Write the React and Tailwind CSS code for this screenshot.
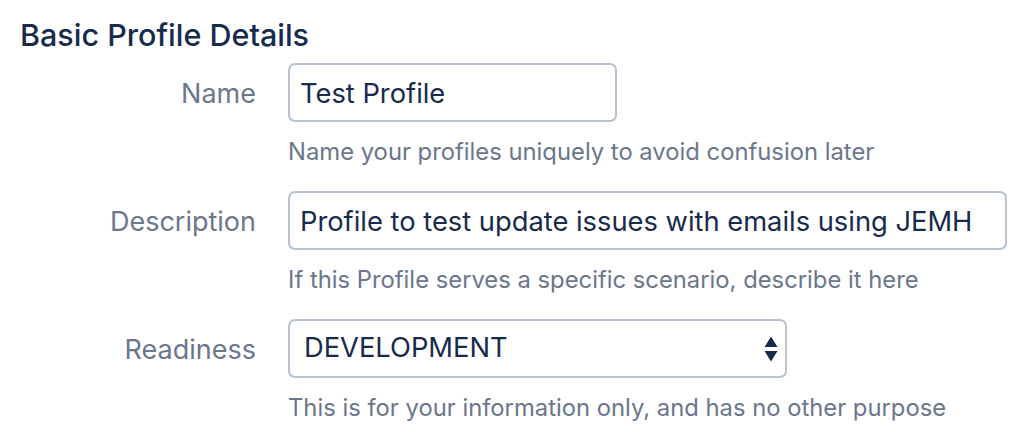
export default function App() {
  const rows = [
    {
      label: "Name",
      value: "Test Profile",
      width: "w-[329px]",
      help: "Name your profiles uniquely to avoid confusion later",
    },
    {
      label: "Description",
      value: "Profile to test update issues with emails using JEMH",
      width: "w-[719px]",
      help: "If this Profile serves a specific scenario, describe it here",
    },
  ];
  return (
    <div
      className="w-[1015px] h-[435px] bg-white overflow-hidden"
      style={{ fontFamily: "Inter, 'Noto Sans', sans-serif" }}
    >
      <h2 className="pl-[20px] pt-[17px] text-[30.5px] leading-[36px] font-medium text-[#172b4d] whitespace-nowrap">
        Basic Profile Details
      </h2>
      <div className="mt-[10px] flex flex-col">
        {rows.map((r) => (
          <div key={r.label} className="flex h-[128px]">
            <div className="w-[256px] h-[59px] flex items-center justify-end pt-[3px] text-[27px] text-[#6b778c] whitespace-nowrap">
              {r.label}
            </div>
            <div className="ml-[32px] flex flex-col">
              <div
                className={`${r.width} h-[59px] border-2 border-[#b8c3cf] rounded-[7px] flex items-center pl-[10px] pt-[4px] text-[27.3px] text-[#172b4d] whitespace-nowrap`}
              >
                {r.value}
              </div>
              <div className="mt-[16px] text-[23.8px] leading-[28px] text-[#6b778c] whitespace-nowrap">{r.help}</div>
            </div>
          </div>
        ))}
        <div className="flex h-[128px]">
          <div className="w-[256px] h-[59px] flex items-center justify-end pt-[3px] text-[27px] text-[#6b778c]">
            Readiness
          </div>
          <div className="ml-[32px] flex flex-col">
            <div className="w-[499px] h-[59px] border-2 border-[#b8c3cf] rounded-[7px] flex items-center justify-between pl-[14px] pr-[7px] text-[27.3px] text-[#172b4d] whitespace-nowrap">
              <span>DEVELOPMENT</span>
              <svg width="14" height="26" viewBox="0 0 14 26">
                <path d="M7 0.5 L13.5 11 L0.5 11 Z" fill="#172b4d" />
                <path d="M0.5 15 L13.5 15 L7 25.5 Z" fill="#172b4d" />
              </svg>
            </div>
            <div className="mt-[16px] text-[23.8px] leading-[28px] text-[#6b778c] whitespace-nowrap">
              This is for your information only, and has no other purpose
            </div>
          </div>
        </div>
      </div>
    </div>
  );
}
